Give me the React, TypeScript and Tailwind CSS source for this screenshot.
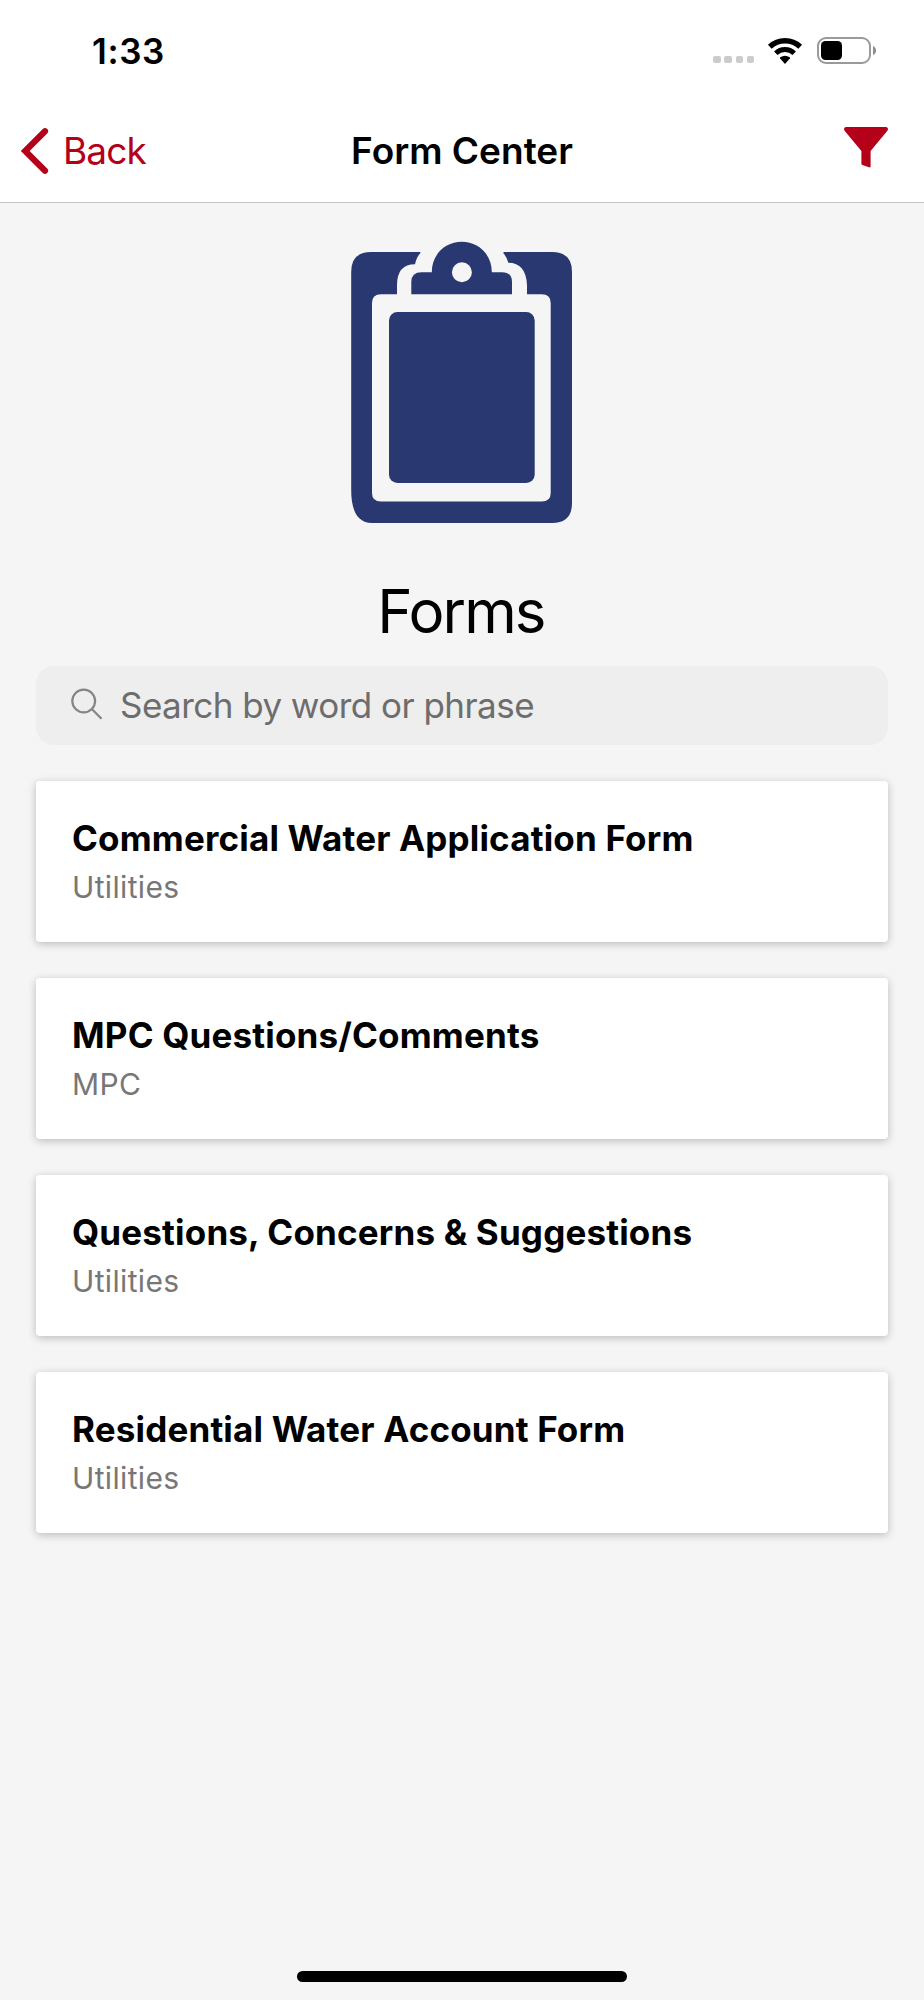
import React from "react";

interface FormItem {
  title: string;
  category: string;
}

const forms: FormItem[] = [
  { title: "Commercial Water Application Form", category: "Utilities" },
  { title: "MPC Questions/Comments", category: "MPC" },
  { title: "Questions, Concerns & Suggestions", category: "Utilities" },
  { title: "Residential Water Account Form", category: "Utilities" },
];

const StatusBar: React.FC = () => (
  <div className="flex h-[101px] items-center justify-between pl-[92px] pr-12">
    <span className="mt-px text-[35px] font-semibold leading-none tracking-[0.6px]">1:33</span>
    <div className="flex items-center">
      <div className="mt-[18px] flex gap-[3.7px]">
        {[0, 1, 2, 3].map((dot) => (
          <span key={dot} className="h-[7.4px] w-[7.4px] rounded-[2px] bg-[#cccccc]" />
        ))}
      </div>
      {/* Wifi */}
      <svg className="ml-[12px]" width="38" height="28" viewBox="0 0 38 28" fill="none">
        <path d="M3.8 9.7A22.3 22.3 0 0 1 34.2 9.7" stroke="#000" strokeWidth="5.4" />
        <path d="M9.8 16.2A13.4 13.4 0 0 1 28.2 16.2" stroke="#000" strokeWidth="5" />
        <path d="M14 21.3Q13.6 20.7 14.3 20.2Q19 17.2 23.7 20.2Q24.4 20.7 24 21.3L19 27Z" fill="#000" />
      </svg>
      {/* Battery */}
      <div className="ml-[13px] flex h-[27px] w-[54px] items-center rounded-[9px] border-2 border-[#9a9a9a] pl-[2px]">
        <span className="h-[19px] w-[20.5px] rounded-[4.5px] bg-black" />
      </div>
      <svg className="ml-[2px]" width="3" height="9" viewBox="0 0 3 9">
        <path d="M0 0Q3 1.5 3 4.5Q3 7.5 0 9Z" fill="#8c8c8c" />
      </svg>
    </div>
  </div>
);

const NavBar: React.FC = () => (
  <div className="grid h-[101px] grid-cols-[1fr_auto_1fr] items-center px-5 pb-[2px]">
    <button className="flex items-center text-[#b40019]">
      <svg width="30" height="48" viewBox="0 0 30 48" fill="none">
        <path d="M25 4.3L5.2 24L25 43.7" stroke="currentColor" strokeWidth="6.2" strokeLinecap="round" />
      </svg>
      <span className="ml-[13px] text-[37px] leading-[48px] tracking-[-0.9px]">Back</span>
    </button>
    <h1 className="text-[37px] font-semibold leading-[48px]">Form Center</h1>
    <button className="mr-4 justify-self-end text-[#b40019]">
      <svg className="-mt-1.5" width="44" height="41" viewBox="0 0 44 41" fill="currentColor">
        <path d="M1.8 0H42.2Q44 .3 44 2Q44 3 43.2 4L26.6 24V39.5Q26.6 40.8 25 40.3L18.4 38Q17.4 37.6 17.4 36.5V24L.8 4Q0 3 0 2Q0 .3 1.8 0Z" />
      </svg>
    </button>
  </div>
);

const ClipboardArt: React.FC = () => (
  <svg width="222" height="283" viewBox="351 241 222 283" fill="#293871">
    {/* Board with the sheet cut out of it */}
    <path d="M351.2 272Q351.2 252 371 252H419.5Q421 252 420.3 253.2Q416.5 257 415 264.3Q397 264.5 397 285V294.3H381Q372 294.3 372 303V493Q372 501.6 381 501.6H541.7Q550.7 501.6 550.7 493V303Q550.7 294.3 541.7 294.3H527V285Q526 262.7 508.3 262.7Q506.5 256.5 503.4 253.2Q503 252 504.3 252H552Q572 252 572 272V503Q572 523 552 523H372C356 523 351.2 508 351.2 490Z" />
    {/* Clip */}
    <path
      fillRule="evenodd"
      d="M411.3 294.3V282Q411.3 272.3 421.5 272.3H431.8C431.8 254 445.5 241.8 461.8 241.8S491.8 254 491.8 272.3H502Q512 272.3 512 282V294.3ZM471.9 272.3A10 10 0 1 0 451.9 272.3A10 10 0 1 0 471.9 272.3Z"
    />
    <rect x="389" y="312" width="145.7" height="171" rx="8.5" />
  </svg>
);

const SearchField: React.FC = () => (
  <div className="flex h-[79px] items-center rounded-[18px] bg-[#eeeeee] pl-[35px]">
    <svg className="-mt-0.5" width="32" height="32" viewBox="0 0 32 32" fill="none" stroke="#858585" strokeWidth="2.2">
      <circle cx="12.7" cy="13" r="11.4" />
      <path d="M20.8 21L30.5 30.8" />
    </svg>
    <span className="ml-[17px] text-[35px] leading-[48px] tracking-[-0.54px] text-[#6d6d6d]">
      Search by word or phrase
    </span>
  </div>
);

const FormCard: React.FC<FormItem> = ({ title, category }) => (
  <li className="h-[161.2px] rounded-[4px] bg-white px-9 pt-[33px] shadow-[0_2px_8px_rgba(0,0,0,0.24)]">
    <h3 className="text-[35px] font-bold leading-[48px] tracking-[0.17px]">{title}</h3>
    <p className="mt-[5px] text-[30px] leading-[40px] tracking-[0.35px] text-[#777777]">{category}</p>
  </li>
);

const App: React.FC = () => {
  return (
    <div className="flex h-[2000px] w-[924px] flex-col overflow-hidden bg-[#f5f5f5] font-[Inter,sans-serif] text-black">
      <header className="border-b border-[#c4c4c4] bg-white">
        <StatusBar />
        <NavBar />
      </header>

      <main className="flex-1 px-9 pt-[38px]">
        <div className="flex flex-col items-center">
          <ClipboardArt />
          <h2 className="mr-[2px] mt-[51px] text-[60px] font-normal leading-[72px] tracking-[-1.9px]">Forms</h2>
        </div>
        <div className="mt-[18.5px]">
          <SearchField />
        </div>
        <ul className="mt-[36px] flex flex-col gap-9">
          {forms.map((form) => (
            <FormCard key={form.title} title={form.title} category={form.category} />
          ))}
        </ul>
      </main>

      {/* Home indicator */}
      <div className="mx-auto mb-[18px] h-[11px] w-[330px] rounded-full bg-black" />
    </div>
  );
};

export default App;
